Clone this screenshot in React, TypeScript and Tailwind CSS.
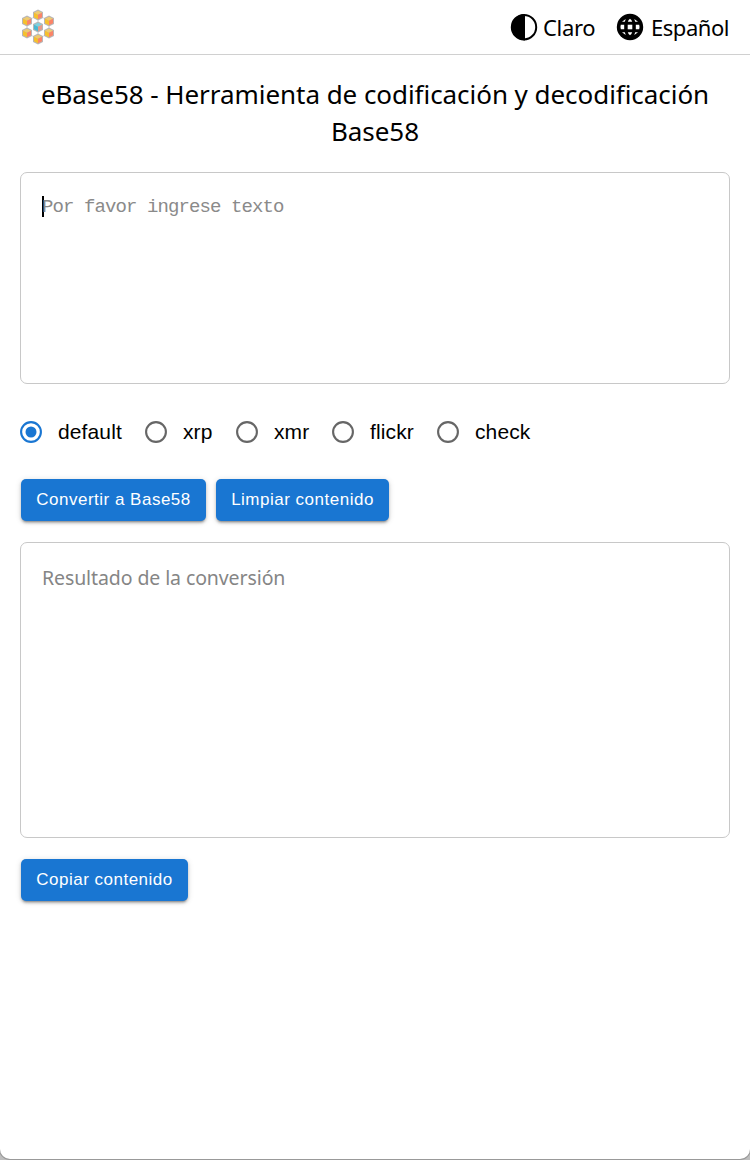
import React, { useState } from "react";

const cubes = [
  { x: 38, y: 15, blue: false },
  { x: 27, y: 21, blue: false },
  { x: 49, y: 21, blue: false },
  { x: 38, y: 27, blue: true },
  { x: 27, y: 33, blue: false },
  { x: 49, y: 33, blue: false },
  { x: 38, y: 39, blue: false },
];

function Logo() {
  return (
    <svg width="34" height="36" viewBox="21 9 34 36" className="block">
      <path d="M38 15 27 21V33L38 39 49 33V21Z M38 15V39" fill="none" stroke="#d6d8dc" strokeWidth="1" />
      {cubes.map((c) => (
        <g key={`${c.x}-${c.y}`} transform={`translate(${c.x} ${c.y})`}>
          <path d="M0-5.4 5-2.9V2.9L0 5.4-5 2.9V-2.9Z" fill="#b9b6b6" />
          <path d="M0-4.3 4-2.3 0-.3-4-2.3Z" fill={c.blue ? "#7fd0df" : "#efcb70"} />
          <path d="M-4-2.3 0-.3V4.3L-4 2.3Z" fill={c.blue ? "#49b9d3" : "#f6c02c"} />
          <path d="M4-2.3 0-.3V4.3L4 2.3Z" fill={c.blue ? "#e59a8a" : "#fb8468"} />
        </g>
      ))}
    </svg>
  );
}

function ContrastIcon() {
  return (
    <svg width="28" height="28" viewBox="0 0 28 28" className="block">
      <circle cx="14" cy="14.2" r="12.2" fill="white" stroke="black" strokeWidth="2" />
      <path d="M15 1a13.2 13.2 0 1 0 0 26.4Z" fill="black" />
    </svg>
  );
}

function GlobeIcon() {
  return (
    <svg width="28" height="28" viewBox="0 0 28 28" className="block">
      <circle cx="14" cy="14" r="13.2" fill="black" />
      <g fill="white">
        <path d="M11.7 11.7h4.6v4.6h-4.6Z" />
        <path d="M4.8 11.7h3.4v4.6H4.8Q4.1 14 4.8 11.7Z" />
        <path d="M23.2 11.7h-3.4v4.6h3.4Q23.9 14 23.2 11.7Z" />
        <path d="M11.8 8.8Q12.4 6.6 14 5.7 15.6 6.6 16.2 8.8Z" />
        <path d="M11.8 19.2Q12.4 21.4 14 22.3 15.6 21.4 16.2 19.2Z" />
        <path d="M6 8.8 9.7 6 8.8 8.8Z" />
        <path d="M22 8.8 18.3 6 19.2 8.8Z" />
        <path d="M6 19.2 9.7 22 8.8 19.2Z" />
        <path d="M22 19.2 18.3 22 19.2 19.2Z" />
      </g>
    </svg>
  );
}

const options = [
  { name: "default", width: "w-[125px]" },
  { name: "xrp", width: "w-[91px]" },
  { name: "xmr", width: "w-[96px]" },
  { name: "flickr", width: "w-[105px]" },
  { name: "check", width: "w-[100px]" },
];

function Button({ width, children }: { width: string; children: React.ReactNode }) {
  return (
    <button
      className={`h-[42px] rounded-[5px] bg-[#1976d2] text-center font-['Liberation_Sans',sans-serif] text-[17px] tracking-[0.5px] whitespace-nowrap text-white shadow-[0_3px_2px_-2px_rgba(0,0,0,.25),0_2px_3px_rgba(0,0,0,.2),0_1px_6px_rgba(0,0,0,.14)] ${width}`}
    >
      {children}
    </button>
  );
}

export default function App() {
  const [selected, setSelected] = useState("default");
  return (
    <div className="h-[1160px] w-[750px] overflow-hidden bg-[#bdbdbd] font-['Noto_Sans',sans-serif] text-black">
      <div className="flex h-[1159px] flex-col rounded-b-[10px] bg-white shadow-[0_0_0_1px_#999]">
        <header className="flex h-[55px] shrink-0 items-center border-b border-[#d0d0d0] pl-[21px]">
          <Logo />
          <div className="ml-[455px] flex items-center">
            <ContrastIcon />
            <span className="ml-[5px] w-[73px] text-[22px] leading-[30px] tracking-[-0.3px]">Claro</span>
            <GlobeIcon />
            <span className="ml-[7px] text-[22px] leading-[30px] tracking-[-0.45px] whitespace-nowrap">Español</span>
          </div>
        </header>
        <main className="flex flex-col px-5">
          <h1 className="mt-[21px] text-center text-[26px] leading-[37px] tracking-[-0.05px]">
            <span className="whitespace-nowrap">eBase58 - Herramienta de codificación y decodificación</span>
            <br />
            Base58
          </h1>
          <div className="mt-[22px] flex h-[212px] items-start rounded-[7px] border border-[#c8c8c8] pt-[23px] pl-[21px]">
            <span className="h-[21px] w-[2px] bg-black" />
            <span className="-ml-[2px] pt-px font-['Liberation_Mono',monospace] text-[19px] leading-[21px] tracking-[-0.9px] text-[#8a8a8a]">
              Por favor ingrese texto
            </span>
          </div>
          <div className="mt-[37px] flex h-[22px] font-['Liberation_Sans',sans-serif] text-[21px] tracking-[0.12px]">
            {options.map((o) => (
              <label key={o.name} className={`flex items-center ${o.width}`} onClick={() => setSelected(o.name)}>
                <svg width="22" height="22" viewBox="0 0 22 22" className="shrink-0">
                  <circle cx="11" cy="11" r="9.9" fill="none" strokeWidth="2.1" stroke={selected === o.name ? "#1976d2" : "#666"} />
                  {selected === o.name && <circle cx="11" cy="11" r="5.5" fill="#1976d2" />}
                </svg>
                <span className="ml-[16px] leading-[22px]">{o.name}</span>
              </label>
            ))}
          </div>
          <div className="mt-[36px] ml-px flex gap-[10px]">
            <Button width="w-[185px]">Convertir a Base58</Button>
            <Button width="w-[173px]">Limpiar contenido</Button>
          </div>
          <div className="mt-[21px] h-[296px] rounded-[7px] border border-[#c8c8c8] pt-[21px] pl-[21px] text-[19.5px] leading-[28px] tracking-[-0.1px] text-[#858585]">
            Resultado de la conversión
          </div>
          <div className="mt-[21px] ml-px flex">
            <Button width="w-[167px]">Copiar contenido</Button>
          </div>
        </main>
      </div>
    </div>
  );
}
